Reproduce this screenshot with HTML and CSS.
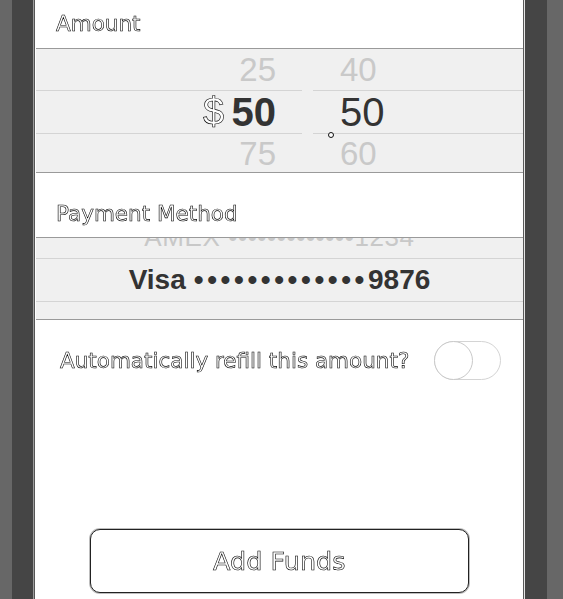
FILE: index.html
```html
<!DOCTYPE html>
<html lang="en">
<head>
<meta charset="utf-8">
<title>Add Funds</title>
<link rel="stylesheet" href="styles.css">
</head>
<body>
<div class="screen">
  <div class="edge edge-l"></div>
  <div class="rail rail-l"></div>
  <main class="panel">
    <div class="label label-amount"><span class="outline">Amount</span></div>
    <div class="amount-picker">
      <div class="col col-left">
        <div class="cell cell-top">25</div>
        <div class="cell cell-mid"><span class="dollar outline">$</span><span class="num-bold">50</span></div>
        <div class="cell cell-bot">75</div>
      </div>
      <div class="col col-right">
        <div class="cell cell-top">40</div>
        <div class="cell cell-mid"><span class="num-reg">50</span></div>
        <div class="cell cell-bot">60</div>
      </div>
      <span class="cursor"></span>
    </div>
    <div class="label label-payment"><span class="outline">Payment Method</span></div>
    <div class="card-picker">
      <div class="card-above"><div class="card-row card-prev">AMEX •••••••••••••1234</div></div>
      <div class="card-row card-sel">Visa <span class="dots">•••••••••••••</span>9876</div>
      <div class="card-below"></div>
    </div>
    <div class="refill-row">
      <span class="refill-text outline">Automatically refill this amount?</span>
      <span class="toggle"><span class="knob"></span></span>
    </div>
    <button class="add-btn" type="button"><span class="outline">Add Funds</span></button>
  </main>
  <div class="rail rail-r"></div>
  <div class="edge edge-r"></div>
</div>
</body>
</html>
```

FILE: styles.css
```css
* { box-sizing: border-box; }
html, body { margin: 0; padding: 0; background: #fff; }
body { overflow: hidden; -webkit-font-smoothing: antialiased; }

.screen {
  display: flex;
  height: 599px;
  width: 563px;
}
.edge { background: #676767; }
.edge-l { width: 12px; }
.edge-r { width: 16px; }
.rail { background: #454545; }
.rail-l { width: 22px; border-right: 1px solid #9c9c9c; }
.rail-r { width: 23px; border-left: 1px solid #e4e4e4; }

.panel {
  width: 490px;
  background: #fff;
  border-left: 1px solid #555;
  border-right: 1px solid #5a5a5a;
  padding-left: 1px;
  display: flex;
  flex-direction: column;
}

.outline {
  display: inline-block;
  color: #fff;
  -webkit-text-stroke: 0.6px #000;
  will-change: transform;
}

.label {
  font-family: "DejaVu Sans", sans-serif;
  font-size: 21.5px;
  line-height: 24px;
  padding-left: 20px;
}
.label-amount { padding-top: 12px; padding-bottom: 12px; }
.label-payment { padding-top: 29px; padding-bottom: 11px; }

.amount-picker {
  position: relative;
  display: grid;
  grid-template-columns: 266px 1fr;
  column-gap: 11px;
  background: #f0f0f0;
  border-top: 1px solid #9a9a9a;
  border-bottom: 1px solid #9a9a9a;
  font-family: "Liberation Sans", Arial, sans-serif;
}
.col { display: flex; flex-direction: column; }
.cell {
  display: flex;
  align-items: center;
  font-size: 33px;
  color: #c9c9c9;
  line-height: 1;
}
.cell-top { height: 41px; }
.cell-mid { height: 44px; border-top: 1px solid #d4d4d4; border-bottom: 1px solid #d4d4d4; color: #333; }
.cell-bot { height: 38px; }
.col-left .cell { justify-content: flex-end; padding-right: 26px; }
.col-right .cell { padding-left: 27px; }

.dollar {
  font-size: 38px;
  margin-right: 7px;
}
.num-bold { font-size: 40px; font-weight: bold; color: #333; }
.num-reg { font-size: 40px; color: #333; }

.cursor {
  position: absolute;
  left: 292px;
  top: 83px;
  width: 6px;
  height: 6px;
  border: 1px solid #111;
  border-radius: 50%;
  background: #fff;
}

.card-picker {
  background: #f0f0f0;
  border-top: 1px solid #9a9a9a;
  border-bottom: 1px solid #9a9a9a;
  font-family: "Liberation Sans", Arial, sans-serif;
}
.card-above { height: 20px; overflow: hidden; }
.card-row {
  display: flex;
  align-items: center;
  justify-content: center;
  height: 42px;
  white-space: nowrap;
}
.card-prev {
  margin-top: -22px;
  font-size: 26px;
  color: #c8c8c8;
  letter-spacing: 0.6px;
}
.card-sel {
  height: 44px;
  border-top: 1px solid #d4d4d4;
  border-bottom: 1px solid #d4d4d4;
  font-size: 28px;
  font-weight: bold;
  color: #333;
}
.dots { letter-spacing: 3.6px; margin-left: 8px; }
.card-below { height: 17px; }

.refill-row {
  display: flex;
  align-items: center;
  justify-content: space-between;
  margin-top: 21px;
  height: 39px;
  padding-left: 24px;
  padding-right: 22px;
}
.refill-text {
  font-family: "DejaVu Sans", sans-serif;
  font-size: 21.5px;
}
.toggle {
  display: flex;
  width: 67px;
  height: 39px;
  border: 1.5px solid #d4d4d4;
  border-radius: 20px;
  background: #fff;
}
.knob {
  width: 39px;
  height: 39px;
  margin: -1.5px;
  border: 1.5px solid #c9c9c9;
  border-radius: 50%;
  background: #fff;
}

.add-btn {
  margin: 149px 54px 0 54px;
  height: 64px;
  border: 1px solid #222;
  box-shadow: 0 0 0 1px #bdbdbd;
  border-radius: 10px;
  background: #fff;
  font-family: "DejaVu Sans", sans-serif;
  font-size: 25.5px;
  padding: 0;
}
```
